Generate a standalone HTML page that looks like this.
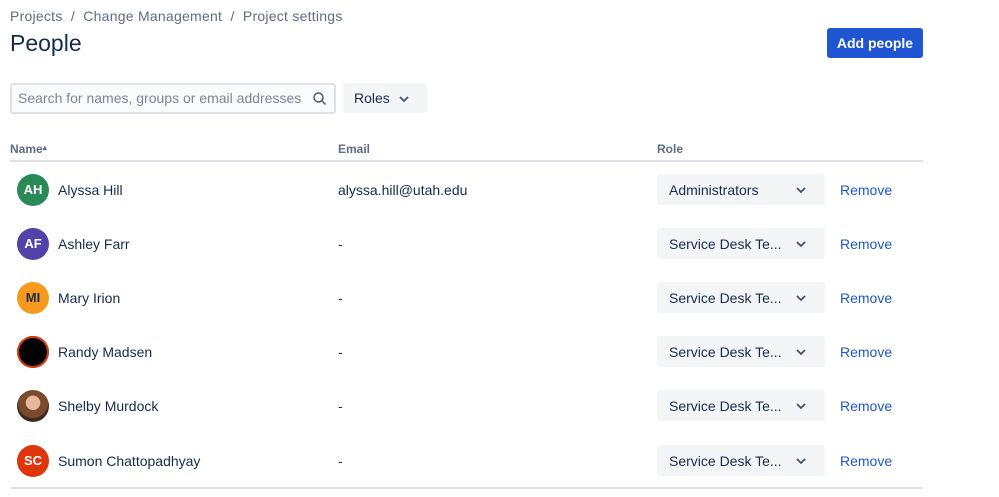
<!DOCTYPE html>
<html><head><meta charset="utf-8"><style>
body{margin:0;width:999px;height:497px;background:#fff;font-family:"Liberation Sans",sans-serif;color:#172b4d;position:relative;overflow:hidden}
.a{position:absolute}
.bc{left:10px;top:8px;font-size:14px;color:#5e6c84;white-space:pre;letter-spacing:0.25px}
h1{position:absolute;left:10px;top:30px;margin:0;font-size:23px;font-weight:500;color:#172b4d}
.btn{left:827px;top:28px;width:96px;height:30px;background:#1f55d0;border-radius:3px;color:#fff;font-size:14px;font-weight:bold;text-align:center;line-height:31px}
.search{left:10px;top:83px;height:27px;border:2px solid #dfe1e6;border-radius:3px;background:#fafbfc;font-size:14px;color:#7a869a;line-height:27px;padding-left:6px;box-sizing:content-box;width:316px}
.roles{left:343px;top:83px;width:84px;height:30px;background:#f4f5f7;border-radius:3px;font-size:14px;line-height:31px}
.th{top:142px;font-size:12px;font-weight:bold;color:#5e6c84}
.line{left:10px;width:913px;height:2px;background:#dfe1e6}
.av{left:17px;width:32px;height:32px;border-radius:50%;color:#fff;font-size:13px;font-weight:bold;text-align:center;line-height:32px}
.nm{left:58px;font-size:14px}
.em{left:338px;font-size:14px}
.dd{left:657px;width:168px;height:31px;background:#f4f5f7;border-radius:3px;font-size:14px;line-height:32px;color:#172b4d}
.dd span{position:absolute;left:12px}
.dd svg,.roles svg{position:absolute;top:10px}
.rm{left:840px;font-size:14px;color:#1f55d0}
</style></head><body>
<div class="a bc">Projects  /  Change Management  /  Project settings</div>
<h1>People</h1>
<div class="a btn">Add people</div>
<div class="a search">Search for names, groups or email addresses
<svg class="a" style="left:300px;top:6px" width="16" height="16" viewBox="0 0 16 16"><circle cx="6.5" cy="6.5" r="4.5" fill="none" stroke="#42526e" stroke-width="1.4"/><path d="M10 10l3.5 3.5" stroke="#42526e" stroke-width="1.4"/></svg></div>
<div class="a roles"><span style="position:absolute;left:11px">Roles</span><svg style="left:55px" width="12" height="12" viewBox="0 0 12 12"><path d="M2 4l4 4 4-4" fill="none" stroke="#42526e" stroke-width="1.8"/></svg></div>
<div class="a th" style="left:10px">Name<span style="font-size:8px;vertical-align:3px">▴</span></div>
<div class="a th" style="left:338px">Email</div>
<div class="a th" style="left:657px">Role</div>
<div class="a line" style="top:160px"></div>
<div class="a line" style="top:487px"></div>

<div class="a av" style="top:174px;background:#2a8a57">AH</div><div class="a nm" style="top:182px">Alyssa Hill</div><div class="a em" style="top:182px">alyssa.hill@utah.edu</div>
<div class="a av" style="top:228px;background:#5243aa">AF</div><div class="a nm" style="top:236px">Ashley Farr</div><div class="a em" style="top:236px">-</div>
<div class="a av" style="top:282px;background:#f79a1e;color:#172b4d">MI</div><div class="a nm" style="top:290px">Mary Irion</div><div class="a em" style="top:290px">-</div>
<div class="a av" style="top:336px;background:#000;box-shadow:inset 0 0 0 2px #d93a0b"></div><div class="a nm" style="top:344px">Randy Madsen</div><div class="a em" style="top:344px">-</div>
<div class="a av" style="top:390px;background:radial-gradient(circle at 50% 40%,#e8b89a 0 28%,#7a4a2c 30% 60%,#3a2a20 62%)"></div><div class="a nm" style="top:398px">Shelby Murdock</div><div class="a em" style="top:398px">-</div>
<div class="a av" style="top:445px;background:#de350b">SC</div><div class="a nm" style="top:453px">Sumon Chattopadhyay</div><div class="a em" style="top:453px">-</div>

<div class="a dd" style="top:174px"><span>Administrators</span><svg style="left:138px" width="12" height="12" viewBox="0 0 12 12"><path d="M2 4l4 4 4-4" fill="none" stroke="#42526e" stroke-width="1.8"/></svg></div>
<div class="a dd" style="top:228px"><span>Service Desk Te...</span><svg style="left:138px" width="12" height="12" viewBox="0 0 12 12"><path d="M2 4l4 4 4-4" fill="none" stroke="#42526e" stroke-width="1.8"/></svg></div>
<div class="a dd" style="top:282px"><span>Service Desk Te...</span><svg style="left:138px" width="12" height="12" viewBox="0 0 12 12"><path d="M2 4l4 4 4-4" fill="none" stroke="#42526e" stroke-width="1.8"/></svg></div>
<div class="a dd" style="top:336px"><span>Service Desk Te...</span><svg style="left:138px" width="12" height="12" viewBox="0 0 12 12"><path d="M2 4l4 4 4-4" fill="none" stroke="#42526e" stroke-width="1.8"/></svg></div>
<div class="a dd" style="top:390px"><span>Service Desk Te...</span><svg style="left:138px" width="12" height="12" viewBox="0 0 12 12"><path d="M2 4l4 4 4-4" fill="none" stroke="#42526e" stroke-width="1.8"/></svg></div>
<div class="a dd" style="top:445px"><span>Service Desk Te...</span><svg style="left:138px" width="12" height="12" viewBox="0 0 12 12"><path d="M2 4l4 4 4-4" fill="none" stroke="#42526e" stroke-width="1.8"/></svg></div>

<div class="a rm" style="top:182px">Remove</div>
<div class="a rm" style="top:236px">Remove</div>
<div class="a rm" style="top:290px">Remove</div>
<div class="a rm" style="top:344px">Remove</div>
<div class="a rm" style="top:398px">Remove</div>
<div class="a rm" style="top:453px">Remove</div>
</body></html>
